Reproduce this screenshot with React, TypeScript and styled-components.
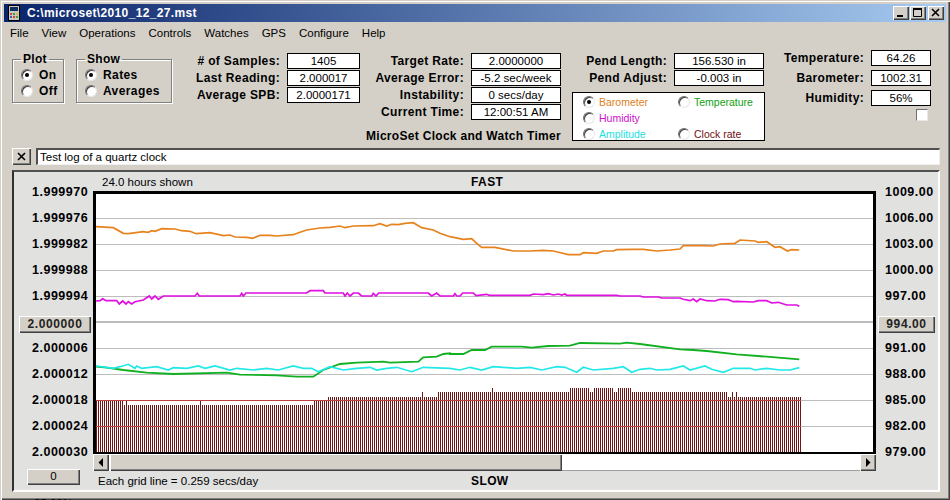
import React from "react";
import styled, { createGlobalStyle, css } from "styled-components";

const Global = createGlobalStyle`
  html, body { margin: 0; padding: 0; background: #d4d0c8; }
  body { font-family: "Liberation Sans", Arial, sans-serif; font-size: 12px; color: #000; }
  * { box-sizing: border-box; }
`;

const FACE = "#d4d0c8";
const raised = css`
  background: ${FACE};
  box-shadow: inset 1px 1px 0 #fff, inset -1px -1px 0 #404040, inset -2px -2px 0 #808080;
`;

type P = [number, number];
const zoomed = (ox: number, oy: number, pts: P[]) =>
  pts.map(([x, y]) => `${(ox + x / 3).toFixed(1)},${(oy + y / 3).toFixed(1)}`).join(" ");

const orange =
  zoomed(90, 190, [[18,110],[70,113],[100,130],[115,131],[160,125],[175,127],[185,122],[195,124],[215,116],[255,117],[275,122],[300,124],[318,131],[360,128],[400,137],[420,135],[435,141],[470,142],[488,145],[510,136],[540,136],[560,138],[610,134],[630,127],[650,120],[690,114],[720,112],[750,108],[765,113],[790,108],[850,107],[870,101],[890,108],[905,103],[925,104],[945,100],[970,98],[995,113],[1030,120],[1050,130],[1080,140]]) +
  " " +
  zoomed(450, 190, [[0,140],[40,148],[65,146],[80,160],[95,172],[135,172],[190,183],[240,183],[280,181],[310,183],[355,194],[390,194],[400,188],[440,190],[460,183],[490,183],[500,179],[550,178],[580,178],[620,183],[660,180],[690,177],[700,167],[760,167],[790,168],[810,162],[855,160],[870,150],[915,153],[925,157],[950,155],[975,172],[990,170],[1012,183],[1025,179],[1048,180]]);

const magenta =
  zoomed(90, 190, [[18,333],[30,332],[38,326],[48,332],[80,332],[88,342],[98,333],[108,342],[115,335],[125,342],[135,335],[160,330],[178,318],[185,327],[195,318],[205,328],[220,318],[315,318],[322,310],[328,318],[450,318],[455,310],[460,318],[468,309],[650,309],[660,302],[700,302],[705,309],[760,309],[765,318],[772,309],[780,318],[790,309],[805,309],[815,318],[845,318],[850,310],[858,318],[866,309],[1015,309],[1025,318],[1040,309],[1050,318],[1080,318]]) +
  " " +
  zoomed(450, 190, [[0,318],[10,318],[15,311],[20,318],[30,318],[38,309],[70,309],[78,317],[110,313],[118,316],[240,316],[250,312],[280,314],[295,311],[310,315],[325,312],[335,315],[345,312],[350,316],[500,316],[510,318],[570,318],[580,321],[625,321],[635,324],[690,324],[700,328],[720,332],[730,327],[740,335],[750,327],[770,332],[795,333],[810,328],[835,329],[850,335],[860,334],[910,336],[925,332],[950,332],[965,339],[985,337],[1010,345],[1040,345],[1048,349]]);

const green =
  zoomed(90, 340, [[18,80],[50,83],[100,90],[170,98],[250,102],[410,98],[450,104],[560,106],[620,110],[670,110],[700,90],[750,72],[800,68],[880,65],[900,68],[985,65],[1000,52],[1040,50],[1060,42],[1080,40]]) +
  " " +
  zoomed(450, 340, [[0,42],[40,42],[65,30],[105,30],[125,20],[215,20],[245,23],[295,18],[360,17],[390,9],[510,11],[530,8],[570,12],[690,28],[730,30],[770,33],[860,43],[950,50],[1048,58]]);

const cyan =
  zoomed(90, 340, [[18,78],[50,82],[70,85],[90,80],[115,73],[135,85],[140,78],[155,85],[200,80],[235,90],[250,83],[290,85],[325,78],[345,85],[375,78],[420,90],[440,85],[490,90],[530,85],[565,90],[610,78],[640,85],[665,85],[685,95],[720,80],[760,90],[800,85],[840,82],[860,90],[890,85],[920,82],[965,95],[1000,82],[1080,85]]) +
  " " +
  zoomed(450, 340, [[0,85],[30,90],[60,82],[95,90],[130,80],[200,85],[240,82],[275,90],[320,80],[345,82],[380,97],[400,82],[430,90],[490,85],[520,80],[545,97],[570,88],[600,85],[620,90],[660,88],[700,78],[720,90],[765,78],[785,88],[820,97],[850,85],[900,85],[915,90],[950,85],[990,90],[1020,90],[1048,83]]);

const barRanges: [number, number, number][] = [
  [96,123,400],[123,128,400],[128,313,405],[313,327,400],[327,420,397],[420,437,397],[437,570,392],[570,590,388],[590,593,392],[593,613,388],[613,617,392],[617,632,388],[632,728,392],[728,801,397],
];
const spikes: Record<number, number> = { 124: 405, 126: 400, 200: 400, 422: 392, 492: 388, 732: 392, 736: 392 };
const barTop = (x: number) => {
  if (spikes[x] !== undefined) return spikes[x];
  const r = barRanges.find(([a, b]) => x >= a && x < b);
  return r ? r[2] : 405;
};
const barsPath = (() => {
  let d = "";
  for (let x = 96; x <= 800; x += 2) d += `M${x + 0.5} ${barTop(x)}V453`;
  return d;
})();

const Window = styled.div`
  width: 950px;
  height: 500px;
  padding: 4px;
  background: ${FACE};
  overflow: hidden;
  box-shadow: inset 1px 1px 0 ${FACE}, inset 2px 2px 0 #fff, inset -1px -1px 0 #404040, inset -2px -2px 0 #808080;
`;
const TitleBar = styled.div`
  height: 18px;
  display: flex;
  align-items: center;
  padding: 0 2px 0 4px;
  background: linear-gradient(90deg, #0a246a, #a6caf0);
`;
const AppIcon = styled.svg`
  width: 12px;
  height: 16px;
  flex: none;
`;
const Title = styled.div`
  margin-left: 7px;
  flex: 1;
  color: #fff;
  font-weight: bold;
  font-size: 12px;
  letter-spacing: 0.35px;
`;
const CaptionButton = styled.div<{ $gap?: number }>`
  ${raised}
  width: 16px;
  height: 14px;
  margin-left: ${(p) => p.$gap ?? 0}px;
  display: flex;
  align-items: center;
  justify-content: center;
`;
const MenuBar = styled.div`
  height: 19px;
  display: flex;
  align-items: center;
  gap: 13px;
  padding: 1px 0 0 6px;
  margin-top: 1px;
`;
const MenuItem = styled.span`
  font-size: 11.5px;
`;
const TopPanel = styled.div`
  height: 106px;
  display: flex;
  align-items: flex-start;
  padding: 11px 0 0 8px;
`;
const Group = styled.fieldset<{ $w: number; $ml: number }>`
  width: ${(p) => p.$w}px;
  height: 50px;
  margin: 0 0 0 ${(p) => p.$ml}px;
  padding: 0 0 0 8px;
  flex: none;
  border: 1px solid #808080;
  box-shadow: 1px 1px 0 #fff, inset 1px 1px 0 #fff;
`;
const Legend = styled.legend`
  padding: 0 2px;
  margin-left: 0;
  font-weight: bold;
  font-size: 12px;
  letter-spacing: 0.3px;
  line-height: 12px;
`;
const RadioRow = styled.div`
  height: 16px;
  display: flex;
  align-items: center;
  gap: 6px;
  font-weight: bold;
  font-size: 12px;
  letter-spacing: 0.4px;
  &:first-of-type { margin-top: 2px; }
`;
const Radio = styled.span<{ $on?: boolean }>`
  position: relative;
  width: 12px;
  height: 12px;
  flex: none;
  border-radius: 50%;
  background: #fff;
  border: 1px solid;
  border-color: #707070 #e8e8e8 #e8e8e8 #707070;
  box-shadow: inset 1px 1px 0 #404040;
  ${(p) =>
    p.$on &&
    css`
      &::after {
        content: "";
        position: absolute;
        left: 3px;
        top: 3px;
        width: 4px;
        height: 4px;
        border-radius: 50%;
        background: #000;
      }
    `}
`;
const Stat = styled.div<{ $left: number; $valueWidth: number; $rowGap?: number; $top?: number }>`
  margin-left: ${(p) => p.$left}px;
  margin-top: ${(p) => p.$top ?? 0}px;
  flex: none;
  display: grid;
  grid-template-columns: auto ${(p) => p.$valueWidth}px;
  grid-auto-rows: 16px;
  column-gap: 7px;
  row-gap: ${(p) => p.$rowGap ?? 1}px;
  justify-content: end;
`;
const StatLabel = styled.div`
  font-weight: bold;
  font-size: 12px;
  letter-spacing: 0.35px;
  text-align: right;
  white-space: nowrap;
  line-height: 16px;
`;
const StatValue = styled.div`
  background: #fff;
  border: 1px solid #000;
  text-align: center;
  font-size: 11.5px;
  line-height: 14px;
  white-space: nowrap;
`;
const CenterColumn = styled.div`
  flex: none;
  display: flex;
  flex-direction: column;
  align-items: flex-end;
`;
const AppName = styled.div`
  margin-top: 9px;
  font-weight: bold;
  font-size: 12px;
  letter-spacing: 0.3px;
  white-space: nowrap;
`;
const PendColumn = styled.div`
  flex: none;
  margin-left: 0;
  width: 204px;
  display: flex;
  flex-direction: column;
  align-items: flex-end;
`;
const PlotChoice = styled.div`
  margin: 6px 0 0 0;
  width: 193px;
  height: 49px;
  background: #fff;
  border: 1px solid #000;
  padding: 1px 0 0 10px;
  display: grid;
  grid-template-columns: 95px 1fr;
  grid-auto-rows: 16px;
`;
const ChoiceItem = styled.div<{ $color: string }>`
  display: flex;
  align-items: center;
  gap: 4px;
  color: ${(p) => p.$color};
  font-size: 10.5px;
  white-space: nowrap;
`;
const EnvColumn = styled.div`
  flex: none;
  width: 166px;
  margin-top: -3px;
`;
const CheckBox = styled.div`
  width: 12px;
  height: 12px;
  margin: 3px 3px 0 auto;
  background: #fff;
  border: 1px solid;
  border-color: #707070 #e8e8e8 #e8e8e8 #707070;
`;
const LogRow = styled.div`
  height: 17px;
  display: flex;
  gap: 5px;
  padding-left: 8px;
  margin-top: 0;
`;
const SmallButton = styled.div`
  ${raised}
  width: 19px;
  flex: none;
  display: flex;
  align-items: center;
  justify-content: center;
`;
const LogField = styled.div`
  width: 904px;
  flex: none;
  background: #fff;
  border-top: 2px solid #505050;
  border-left: 2px solid #505050;
  border-right: 1px solid #f0f0f0;
  border-bottom: 1px solid #f0f0f0;
  font-size: 11.5px;
  line-height: 14px;
  padding-left: 2px;
`;
const PlotPanel = styled.div`
  margin: 5px 0 0 8px;
  width: 928px;
  height: 322px;
  background: #e1e1e0;
  border-top: 2px solid #505050;
  border-left: 2px solid #303030;
  border-right: 2px solid #fff;
  border-bottom: 2px solid #fff;
  display: grid;
  grid-template-columns: 79px 783px 1fr;
  grid-template-rows: 19px 263px 17px 19px;
`;
const AxisBase = css`
  grid-row: 1 / -1;
  display: grid;
  grid-auto-rows: 16px;
  row-gap: 10px;
  align-content: start;
  padding-top: 12px;
  font-weight: bold;
  font-size: 12.5px;
  letter-spacing: 0.5px;
  line-height: 16px;
`;
const LeftAxis = styled.div`
  ${AxisBase}
  padding-left: 18px;
`;
const RightAxis = styled.div`
  ${AxisBase}
  padding-left: 9px;
`;
const AxisButton = styled.div<{ $width: number; $shift: number }>`
  ${raised}
  width: ${(p) => p.$width}px;
  height: 17px;
  margin-left: ${(p) => p.$shift}px;
  margin-top: 2px;
  font-weight: normal;
  font-size: 12px;
  letter-spacing: 0.6px;
  text-align: center;
  line-height: 17px;
  font-weight: bold;
  color: #222;
`;
const ZeroButton = styled.div`
  ${raised}
  width: 53px;
  height: 16px;
  margin: -1px 0 0 -5px;
  text-align: center;
  font-weight: normal;
  letter-spacing: 0;
  font-size: 11.5px;
  line-height: 15px;
`;
const Percent = styled.div`
  width: 53px;
  margin: 0 0 0 -5px;
  padding-top: 0;
  text-align: center;
  font-weight: normal;
  letter-spacing: 0;
  font-size: 11.5px;
  line-height: 14px;
`;
const CaptionRow = styled.div`
  display: grid;
  grid-template-columns: 378px auto;
  align-items: center;
`;
const Note = styled.span<{ $pad: number }>`
  padding-left: ${(p) => p.$pad}px;
  font-size: 11.5px;
  white-space: nowrap;
`;
const Strong = styled.span`
  font-weight: bold;
  font-size: 12px;
  letter-spacing: 0.4px;
`;
const ChartSvg = styled.svg`
  display: block;
  width: 783px;
  height: 263px;
`;
const ScrollBar = styled.div`
  display: flex;
  background: #fff;
`;
const ScrollButton = styled.div`
  ${raised}
  width: 16px;
  height: 17px;
  flex: none;
  display: flex;
  align-items: center;
  justify-content: center;
`;
const ScrollThumb = styled.div`
  ${raised}
  width: 452px;
  margin-left: 1px;
  flex: none;
`;
const ScrollTrack = styled.div`
  flex: 1;
  background: #fff;
  box-shadow: inset 0 -1px 0 #a0a0a0;
`;

const rateLabels = ["1.999970","1.999976","1.999982","1.999988","1.999994",null,"2.000006","2.000012","2.000018","2.000024","2.000030"];
const rightLabels = ["1009.00","1006.00","1003.00","1000.00","997.00",null,"991.00","988.00","985.00","982.00","979.00"];
const gridYs = [218, 244, 270, 296, 348, 374, 400, 426];

export default function App() {
  return (
    <Window>
      <Global />
      <TitleBar>
        <AppIcon viewBox="0 0 12 16">
          <rect x="0.5" y="0.5" width="11" height="15" fill="#c8c8c0" stroke="#000" />
          <rect x="2" y="2" width="8" height="4" fill="#103060" />
          <rect x="2" y="8" width="2" height="2" fill="#e04030" />
          <rect x="5" y="8" width="2" height="2" fill="#40a040" />
          <rect x="8" y="8" width="2" height="2" fill="#e0b030" />
          <rect x="2" y="11" width="2" height="2" fill="#4060c0" />
          <rect x="5" y="11" width="2" height="2" fill="#e04030" />
          <rect x="8" y="11" width="2" height="2" fill="#40a040" />
        </AppIcon>
        <Title>C:\microset\2010_12_27.mst</Title>
        <CaptionButton>
          <svg width="10" height="10" viewBox="0 0 10 10"><rect x="1" y="7" width="6" height="2" fill="#000" /></svg>
        </CaptionButton>
        <CaptionButton $gap={1}>
          <svg width="10" height="10" viewBox="0 0 10 10"><path d="M0.5 1.5h8v7h-8z M0 1h9" fill="none" stroke="#000" /><rect x="0" y="0" width="9" height="2" fill="#000" /></svg>
        </CaptionButton>
        <CaptionButton $gap={2}>
          <svg width="10" height="10" viewBox="0 0 10 10"><path d="M1 1l7 7M8 1l-7 7" stroke="#000" strokeWidth="1.6" /></svg>
        </CaptionButton>
      </TitleBar>
      <MenuBar>
        {["File","View","Operations","Controls","Watches","GPS","Configure","Help"].map((m) => (
          <MenuItem key={m}>{m}</MenuItem>
        ))}
      </MenuBar>
      <TopPanel>
        <Group $w={52} $ml={0}>
          <Legend>Plot</Legend>
          <RadioRow><Radio $on />On</RadioRow>
          <RadioRow><Radio />Off</RadioRow>
        </Group>
        <Group $w={96} $ml={12}>
          <Legend>Show</Legend>
          <RadioRow><Radio $on />Rates</RadioRow>
          <RadioRow><Radio />Averages</RadioRow>
        </Group>
        <Stat $left={16} $valueWidth={73} style={{ width: 172 }}>
          <StatLabel># of Samples:</StatLabel><StatValue>1405</StatValue>
          <StatLabel>Last Reading:</StatLabel><StatValue>2.000017</StatValue>
          <StatLabel>Average SPB:</StatLabel><StatValue>2.0000171</StatValue>
        </Stat>
        <CenterColumn>
          <Stat $left={0} $valueWidth={90} style={{ width: 201 }}>
            <StatLabel>Target Rate:</StatLabel><StatValue>2.0000000</StatValue>
            <StatLabel>Average Error:</StatLabel><StatValue>-5.2 sec/week</StatValue>
            <StatLabel>Instability:</StatLabel><StatValue>0 secs/day</StatValue>
            <StatLabel>Current Time:</StatLabel><StatValue>12:00:51 AM</StatValue>
          </Stat>
          <AppName>MicroSet Clock and Watch Timer</AppName>
        </CenterColumn>
        <PendColumn>
          <Stat $left={0} $valueWidth={90} style={{ marginRight: 1 }}>
            <StatLabel>Pend Length:</StatLabel><StatValue>156.530 in</StatValue>
            <StatLabel>Pend Adjust:</StatLabel><StatValue>-0.003 in</StatValue>
          </Stat>
          <PlotChoice>
            <ChoiceItem $color="#e0801c"><Radio $on />Barometer</ChoiceItem>
            <ChoiceItem $color="#10a010"><Radio />Temperature</ChoiceItem>
            <ChoiceItem $color="#d010d0"><Radio />Humidity</ChoiceItem>
            <span />
            <ChoiceItem $color="#20e0e0"><Radio />Amplitude</ChoiceItem>
            <ChoiceItem $color="#701010"><Radio />Clock rate</ChoiceItem>
          </PlotChoice>
        </PendColumn>
        <EnvColumn>
          <Stat $left={0} $valueWidth={60} $rowGap={4}>
            <StatLabel>Temperature:</StatLabel><StatValue>64.26</StatValue>
            <StatLabel>Barometer:</StatLabel><StatValue>1002.31</StatValue>
            <StatLabel>Humidity:</StatLabel><StatValue>56%</StatValue>
          </Stat>
          <CheckBox />
        </EnvColumn>
      </TopPanel>
      <LogRow>
        <SmallButton>
          <svg width="9" height="9" viewBox="0 0 9 9"><path d="M1 1l7 7M8 1l-7 7" stroke="#000" strokeWidth="1.6" /></svg>
        </SmallButton>
        <LogField>Test log of a quartz clock</LogField>
      </LogRow>
      <PlotPanel>
        <LeftAxis>
          {rateLabels.map((l, i) =>
            l ? <div key={i}>{l}</div> : <AxisButton key={i} $width={72} $shift={-13}>2.000000</AxisButton>
          )}
          <ZeroButton>0</ZeroButton>
          <Percent>25.00%</Percent>
        </LeftAxis>
        <CaptionRow>
          <Note $pad={9}>24.0 hours shown</Note>
          <Strong>FAST</Strong>
        </CaptionRow>
        <RightAxis style={{ gridColumn: 3 }}>
          {rightLabels.map((l, i) =>
            l ? <div key={i}>{l}</div> : <AxisButton key={i} $width={57} $shift={-7}>994.00</AxisButton>
          )}
        </RightAxis>
        <ChartSvg style={{ gridColumn: 2, gridRow: 2 }} viewBox="93 191 783 263">
          <rect x="93" y="191" width="783" height="263" fill="#fff" />
          <g shapeRendering="crispEdges">
            {gridYs.map((y) => (
              <line key={y} x1="96" x2="873" y1={y + 0.5} y2={y + 0.5} stroke="#bdbdbd" />
            ))}
            <line x1="96" x2="873" y1="322" y2="322" stroke="#bdbdbd" strokeWidth="2" />
            <path d={barsPath} stroke="#701616" fill="none" />
            <line x1="96" x2="801" y1="400.5" y2="400.5" stroke="#c04040" />
            <line x1="96" x2="801" y1="426.5" y2="426.5" stroke="#c84040" />
            <rect x="93" y="191" width="3" height="263" fill="#000" />
            <rect x="873" y="191" width="3" height="263" fill="#000" />
            <rect x="93" y="191" width="783" height="3" fill="#000" />
            <rect x="93" y="452" width="783" height="2" fill="#000" />
          </g>
          <polyline points={orange} fill="none" stroke="#e8821c" strokeWidth="1.7" />
          <polyline points={magenta} fill="none" stroke="#e010e0" strokeWidth="1.7" />
          <polyline points={green} fill="none" stroke="#10b020" strokeWidth="1.8" />
          <polyline points={cyan} fill="none" stroke="#22e8e8" strokeWidth="1.7" />
        </ChartSvg>
        <ScrollBar style={{ gridColumn: 2, gridRow: 3 }}>
          <ScrollButton>
            <svg width="6" height="9" viewBox="0 0 6 9"><path d="M5 0v9L0.5 4.5z" fill="#000" /></svg>
          </ScrollButton>
          <ScrollThumb />
          <ScrollTrack />
          <ScrollButton>
            <svg width="6" height="9" viewBox="0 0 6 9"><path d="M1 0v9l4.5-4.5z" fill="#000" /></svg>
          </ScrollButton>
        </ScrollBar>
        <CaptionRow style={{ gridColumn: 2, gridRow: 4 }}>
          <Note $pad={5}>Each grid line = 0.259 secs/day</Note>
          <Strong>SLOW</Strong>
        </CaptionRow>
      </PlotPanel>
    </Window>
  );
}
